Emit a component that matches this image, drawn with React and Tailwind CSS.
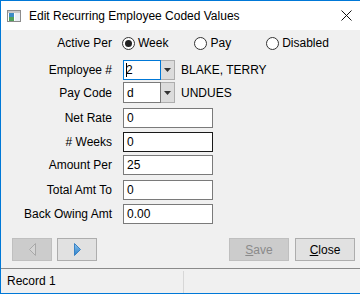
import React from 'react'

const font = { fontFamily: '"Liberation Sans", Arial, sans-serif' }

function Radio({ checked, label, className = '' }) {
  return (
    <div className={`flex items-center gap-[3px] ${className}`}>
      <span className="w-[13px] h-[13px] rounded-full border border-[#333] bg-white flex items-center justify-center">
        {checked && <span className="w-[7px] h-[7px] rounded-full bg-[#222]" />}
      </span>
      <span>{label}</span>
    </div>
  )
}

function Row({ label, children, className = '' }) {
  return (
    <div className={`flex items-center h-[20px] ${className}`}>
      <div className="w-[111px] text-right">{label}</div>
      <div className="ml-[11px] flex items-center">{children}</div>
    </div>
  )
}

function Field({ value, border = 'border-[#7a7a7a]', width = 'w-[90px]', caret }) {
  return (
    <div className={`h-[20px] ${width} bg-white border ${border} flex items-center pl-[2px]`}>
      {caret && <span className="w-px h-[14px] bg-black" />}
      <span className={caret ? '' : 'pl-px'}>{value}</span>
    </div>
  )
}

function Combo({ value, text, border, caret, tall }) {
  return (
    <div className={`flex items-center ${tall ? 'h-[21px]' : 'h-[20px]'}`}>
      <div className={`h-full w-[38px] bg-white border ${border} flex items-center pl-[2px]`}>
        {caret && <span className="w-px h-[14px] bg-black" />}
        <span className={caret ? '-ml-px' : 'pl-px'}>{value}</span>
      </div>
      <div className="h-full w-[14px] bg-[#dcdcdc] border border-[#adadad] border-l-0 flex items-center justify-center">
        <svg width="7" height="4" viewBox="0 0 7 4"><path d="M0 0h7L3.5 4z" fill="#333" /></svg>
      </div>
      <span className="ml-[6px]">{text}</span>
    </div>
  )
}

export default function App() {
  return (
    <div className="w-[360px] h-[294px] bg-[#f0f0f0] text-black text-[12px] flex flex-col border-t border-l border-b border-[#0078d7] overflow-hidden" style={font}>
      {/* Title bar */}
      <div className="h-[29px] bg-white flex items-center shrink-0">
        <svg className="ml-[6px]" width="14" height="12" viewBox="0 0 14 12">
          <rect x="0.5" y="0.5" width="13" height="11" fill="#fff" stroke="#8c8c8c" />
          <rect x="1" y="1" width="12" height="2" fill="#c8c8c8" />
          <rect x="2" y="3" width="5" height="8" fill="#3b8bc4" />
          <rect x="2" y="7" width="5" height="4" fill="#4fa05a" />
          <rect x="8" y="3" width="5" height="8" fill="#e8eef4" />
        </svg>
        <span className="ml-[8px]">Edit Recurring Employee Coded Values</span>
        <svg className="ml-auto mr-[8px]" width="11" height="11" viewBox="0 0 11 11">
          <path d="M0.5 0.5l10 10M10.5 0.5l-10 10" stroke="#111" strokeWidth="1" />
        </svg>
      </div>

      {/* Form */}
      <div className="flex flex-col pt-[3px]">
        <Row label="Active Per">
          <Radio checked label="Week" className="-ml-px" />
          <Radio label="Pay" className="ml-[26px]" />
          <Radio label="Disabled" className="ml-[35px]" />
        </Row>
        <Row label="Employee #" className="mt-[7px]">
          <Combo value="2" text="BLAKE, TERRY" border="border-[#0078d7]" caret />
        </Row>
        <Row label="Pay Code" className="mt-[2px] h-[21px]">
          <Combo value="d" text="UNDUES" border="border-[#7a7a7a]" tall />
        </Row>
        <Row label="Net Rate" className="mt-[5px]">
          <Field value="0" />
        </Row>
        <Row label="# Weeks" className="mt-[4px]">
          <Field value="0" border="border-[#1a1a1a]" />
        </Row>
        <Row label="Amount Per" className="mt-[3px]">
          <Field value="25" />
        </Row>
        <Row label="Total Amt To" className="mt-[5px]">
          <Field value="0" />
        </Row>
        <Row label="Back Owing Amt" className="mt-[4px]">
          <Field value="0.00" />
        </Row>
      </div>

      {/* Buttons */}
      <div className="flex items-center mt-[14px] h-[23px]">
        <button className="ml-[11px] w-[40px] h-full bg-[#cccccc] border border-[#bfbfbf] flex items-center justify-center">
          <svg width="7" height="13" viewBox="0 0 7 13"><path d="M6.5 0.5v12L0.5 6.5z" fill="#d4d4d4" stroke="#a8a8a8" /></svg>
        </button>
        <button className="ml-[5px] w-[40px] h-full bg-[#e1e1e1] border border-[#adadad] flex items-center justify-center">
          <svg width="7" height="13" viewBox="0 0 7 13">
            <defs>
              <linearGradient id="g" x1="0" y1="0" x2="0" y2="1">
                <stop offset="0" stopColor="#8cc4ee" />
                <stop offset="1" stopColor="#2a7fc9" />
              </linearGradient>
            </defs>
            <path d="M0.5 0.5v12L6.5 6.5z" fill="url(#g)" stroke="#3a82c4" />
          </svg>
        </button>
        <button className="ml-auto w-[60px] h-full bg-[#cccccc] border border-[#bfbfbf] text-[#8a8a8a]">
          <span className="underline">S</span>ave
        </button>
        <button className="ml-[6px] mr-[5px] w-[60px] h-full bg-[#e1e1e1] border border-[#adadad]">
          <span className="underline">C</span>lose
        </button>
      </div>

      {/* Status bar */}
      <div className="mt-auto h-[25px] border-t border-[#8a8a8a] flex items-center">
        <span className="ml-[6px] w-[176px]">Record 1</span>
        <span className="self-stretch mt-[2px] w-px bg-[#d7d7d7]" />
      </div>
    </div>
  )
}
